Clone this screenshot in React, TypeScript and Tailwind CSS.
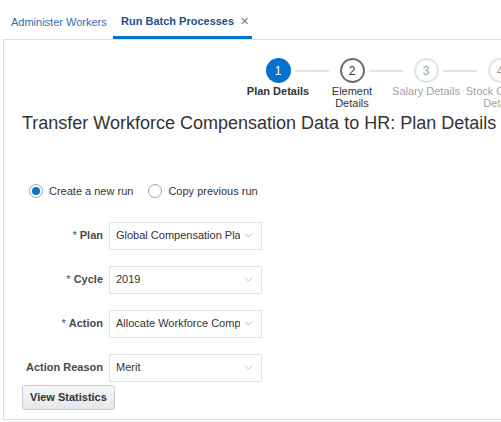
import { ChevronDown } from "lucide-react";

const stops = [
  { n: "1", label: ["Plan Details"], state: "current" },
  { n: "2", label: ["Element", "Details"], state: "next" },
  { n: "3", label: ["Salary Details"], state: "off" },
  { n: "4", label: ["Stock Options", "Details"], state: "off" },
];

function Stop({ n, label, state, last }: { n: string; label: string[]; state: string; last: boolean }) {
  const circle =
    state === "current"
      ? "bg-[#0572ce] text-white border-[#0572ce]"
      : state === "next"
      ? "bg-white text-[#333] border-[#6f6f6f]"
      : "bg-white text-[#9ca3ab] border-[#dfe4e8]";
  const text =
    state === "current" ? "font-bold text-[#333]" : state === "next" ? "text-[#333]" : "text-[#9ca3ab]";
  return (
    <div className="relative w-[74px] shrink-0 flex flex-col items-center">
      {!last && (
        <div className="absolute top-[12px] left-[54px] w-[34px] h-[2px] bg-[#dfe4e8]" />
      )}
      <div className={`w-[25px] h-[25px] rounded-full border-2 flex items-center justify-center text-[12px] ${circle}`}>
        {n}
      </div>
      <div className={`mt-[2px] text-[11px] leading-[12px] text-center whitespace-nowrap ${text}`}>
        {label.map((l) => (
          <div key={l}>{l}</div>
        ))}
      </div>
    </div>
  );
}

function Select({ value }: { value: string }) {
  return (
    <div className="w-[153px] h-[28px] border border-[#dfe4e8] bg-white flex items-center pl-[6px] pr-[6px]">
      <span className="flex-1 overflow-hidden whitespace-nowrap text-[11px] text-[#333]">{value}</span>
      <ChevronDown className="w-[13px] h-[13px] text-[#a8b0b8] shrink-0 ml-[2px]" strokeWidth={1.5} />
    </div>
  );
}

function Row({ label, req, value }: { label: string; req?: boolean; value: string }) {
  return (
    <div className="flex items-center h-[28px]">
      <div className="w-[105px] pr-[6px] text-right text-[11px] font-bold text-[#4a4a4a] whitespace-nowrap">
        {req && <span className="text-[#1d4f91] font-normal mr-[3px]">*</span>}
        {label}
      </div>
      <Select value={value} />
    </div>
  );
}

export default function App() {
  return (
    <div className="w-[501px] h-[422px] overflow-hidden bg-white" style={{ fontFamily: '"Liberation Sans", Arial, sans-serif' }}>
      {/* Tabs */}
      <div className="flex items-end h-[39px] text-[11px] whitespace-nowrap">
        <div className="w-[113px] pl-[11px] h-[39px] flex items-center pt-[6px] text-[#2e6db4]">Administer Workers</div>
        <div className="w-[139px] h-[39px] flex items-center pl-[8px] pt-[6px] border-b-[3px] border-[#0572ce] text-[#1b4f88] font-bold">
          Run Batch Processes
          <span className="ml-[6px] text-[#777] font-normal text-[11px]">✕</span>
        </div>
      </div>

      {/* Panel */}
      <div className="ml-[3px] w-[700px] h-[381px] border-l border-t border-b border-[#d6dfe6]">
        <div className="flex pt-[18px] pl-[237px]">
          {stops.map((s, i) => (
            <Stop key={s.n} n={s.n} label={s.label} state={s.state} last={i === stops.length - 1} />
          ))}
        </div>

        <h1 className="mt-[3px] ml-[18px] text-[18px] leading-[22px] text-[#333] whitespace-nowrap">
          Transfer Workforce Compensation Data to HR: Plan Details
        </h1>

        <div className="mt-[49px] ml-[25px] flex items-center gap-[6px] text-[11px] text-[#333]">
          <span className="w-[14px] h-[14px] rounded-full border border-[#9aa5ae] flex items-center justify-center bg-white">
            <span className="w-[8px] h-[8px] rounded-full bg-[#0572ce]" />
          </span>
          <span className="mr-[9px]">Create a new run</span>
          <span className="w-[14px] h-[14px] rounded-full border border-[#9aa5ae] bg-white" />
          <span>Copy previous run</span>
        </div>

        <div className="mt-[22px] flex flex-col gap-[16px]">
          <Row label="Plan" req value="Global Compensation Plan" />
          <Row label="Cycle" req value="2019" />
          <Row label="Action" req value="Allocate Workforce Compensation" />
          <Row label="Action Reason" value="Merit" />
        </div>

        <button className="mt-[3px] ml-[18px] h-[25px] px-[7px] rounded-[3px] border border-[#c4ced7] bg-gradient-to-b from-[#f6f8f9] to-[#e4e8eb] text-[11px] font-bold text-[#333]">
          View Statistics
        </button>
      </div>
    </div>
  );
}
